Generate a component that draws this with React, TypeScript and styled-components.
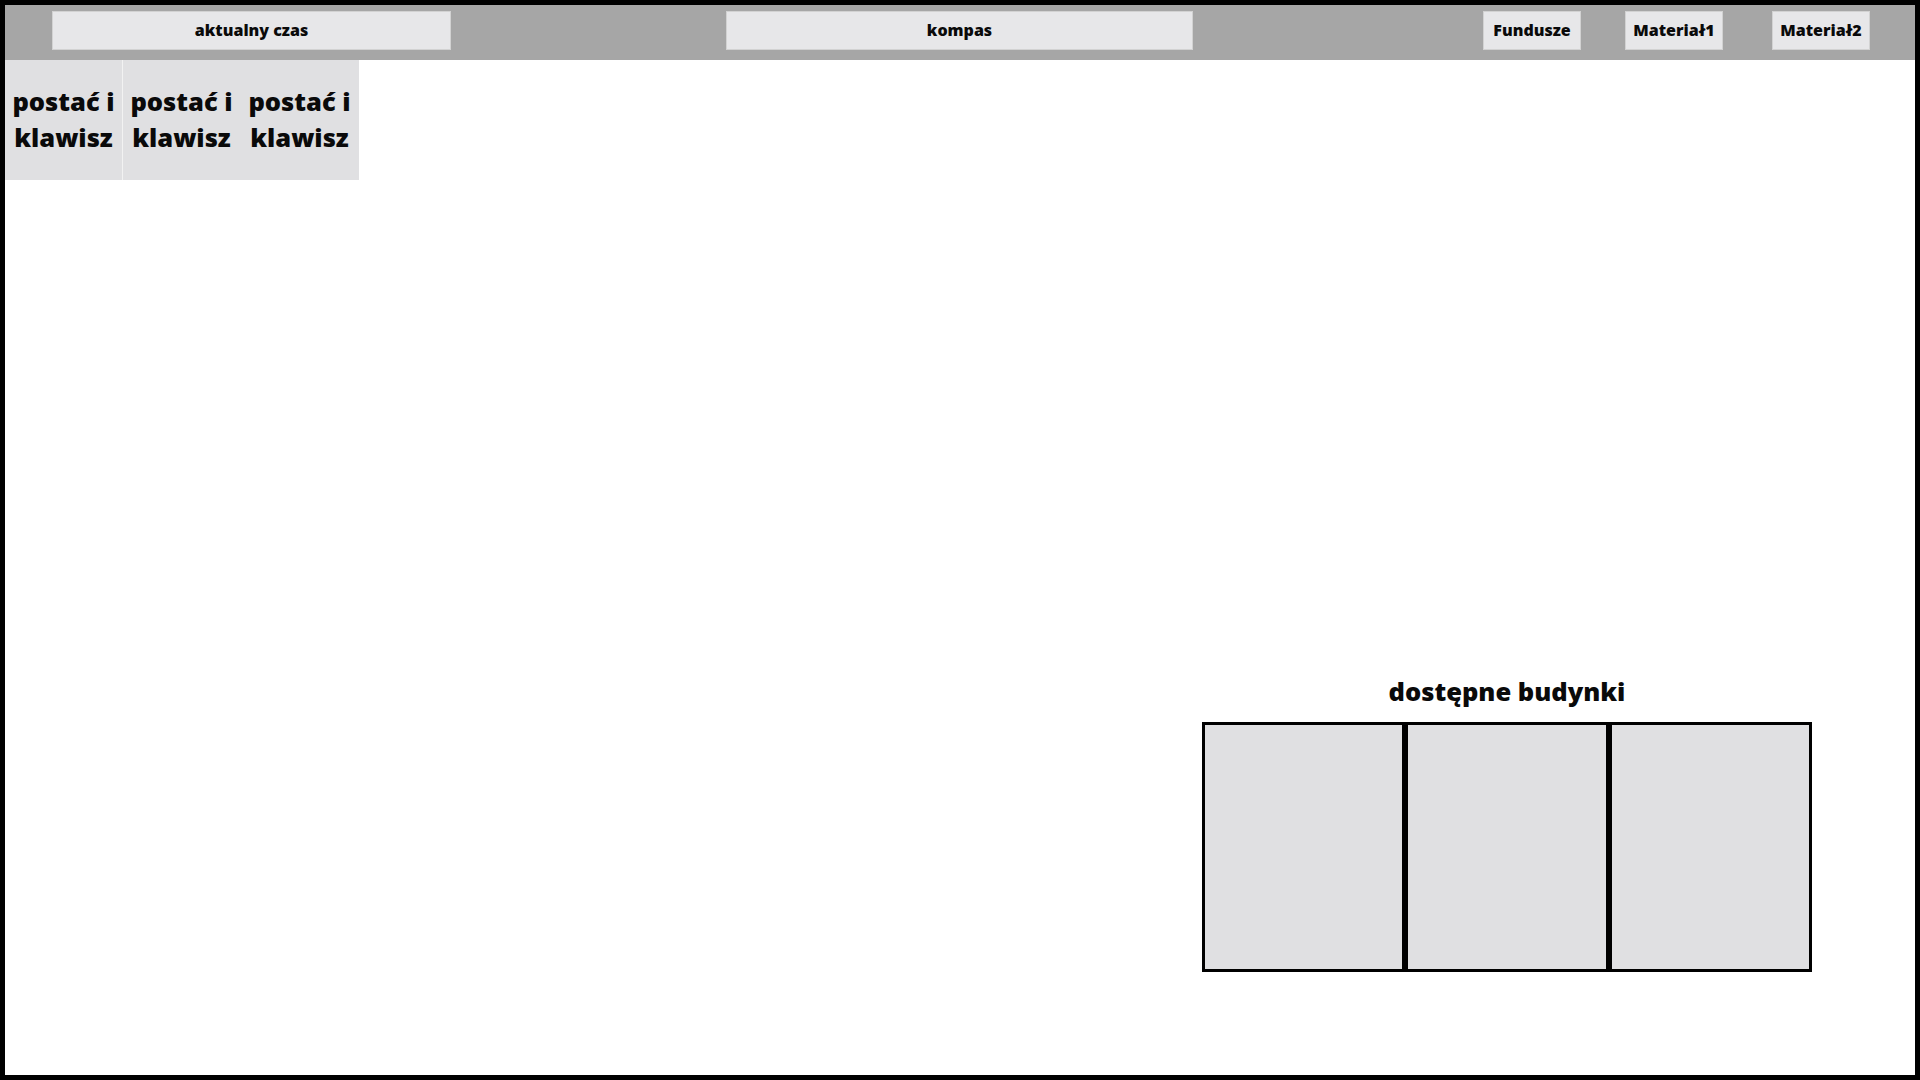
import React from 'react'
import styled, { createGlobalStyle } from 'styled-components'

const GlobalStyle = createGlobalStyle`
  html, body {
    margin: 0;
    padding: 0;
    background: #fff;
  }
  * {
    box-sizing: border-box;
  }
`

const Screen = styled.div`
  width: 100vw;
  height: 100vh;
  border: 5px solid #000;
  display: flex;
  flex-direction: column;
  background: #fff;
  font-family: "Open Sans", "Noto Sans", sans-serif;
  font-weight: 800;
  color: #0a0a0a;
  overflow: hidden;
`

const TopBar = styled.div`
  height: 55px;
  flex-shrink: 0;
  background: #a6a6a6;
  display: flex;
  align-items: center;
  padding: 0 45px 5px 47px;
`

const BarBox = styled.div<{ $width: number; $offset?: number }>`
  width: ${({ $width }) => $width}px;
  margin-left: ${({ $offset = 0 }) => $offset}px;
  height: 39px;
  background: #e7e7e9;
  border: 1px solid #d2d2d2;
  display: flex;
  align-items: center;
  justify-content: center;
  font-size: 16px;
`

const Resources = styled.div`
  margin-left: auto;
  display: flex;
`

const Main = styled.div`
  flex: 1;
  display: flex;
  flex-direction: column;
`

const CharacterRow = styled.div`
  display: flex;
  align-self: flex-start;
`

const CharacterCard = styled.div<{ $divider?: boolean }>`
  width: 118px;
  height: 120px;
  background: #e0e0e2;
  border-right: 1px solid ${({ $divider }) => ($divider ? '#f2f2f2' : '#e0e0e2')};
  display: flex;
  align-items: center;
  justify-content: center;
  text-align: center;
  font-size: 25.5px;
  line-height: 36px;
  padding: 0 2px 2px;
`

const BuildingsPanel = styled.div`
  margin-top: auto;
  align-self: flex-end;
  margin-right: 103px;
  margin-bottom: 103px;
  width: 610px;
  display: flex;
  flex-direction: column;
  align-items: center;
`

const PanelTitle = styled.div`
  font-size: 25.5px;
  line-height: 35px;
  margin-bottom: 13px;
`

const BuildingRow = styled.div`
  width: 100%;
  display: flex;
`

const BuildingSlot = styled.div`
  flex: 1;
  height: 250px;
  background: #e0e0e2;
  border: 3.5px solid #000;
`

const resources = [
  { name: 'Fundusze', offset: 0 },
  { name: 'Materiał1', offset: 44 },
  { name: 'Materiał2', offset: 49 },
]

export default function App() {
  return (
    <>
      <GlobalStyle />
      <Screen>
        <TopBar>
          <BarBox $width={399}>aktualny czas</BarBox>
          <BarBox $width={467} $offset={275}>kompas</BarBox>
          <Resources>
            {resources.map((r) => (
              <BarBox key={r.name} $width={98} $offset={r.offset}>{r.name}</BarBox>
            ))}
          </Resources>
        </TopBar>
        <Main>
          <CharacterRow>
            {[0, 1, 2].map((i) => (
              <CharacterCard key={i} $divider={i === 0}>
                postać i klawisz
              </CharacterCard>
            ))}
          </CharacterRow>
          <BuildingsPanel>
            <PanelTitle>dostępne budynki</PanelTitle>
            <BuildingRow>
              <BuildingSlot />
              <BuildingSlot />
              <BuildingSlot />
            </BuildingRow>
          </BuildingsPanel>
        </Main>
      </Screen>
    </>
  )
}
